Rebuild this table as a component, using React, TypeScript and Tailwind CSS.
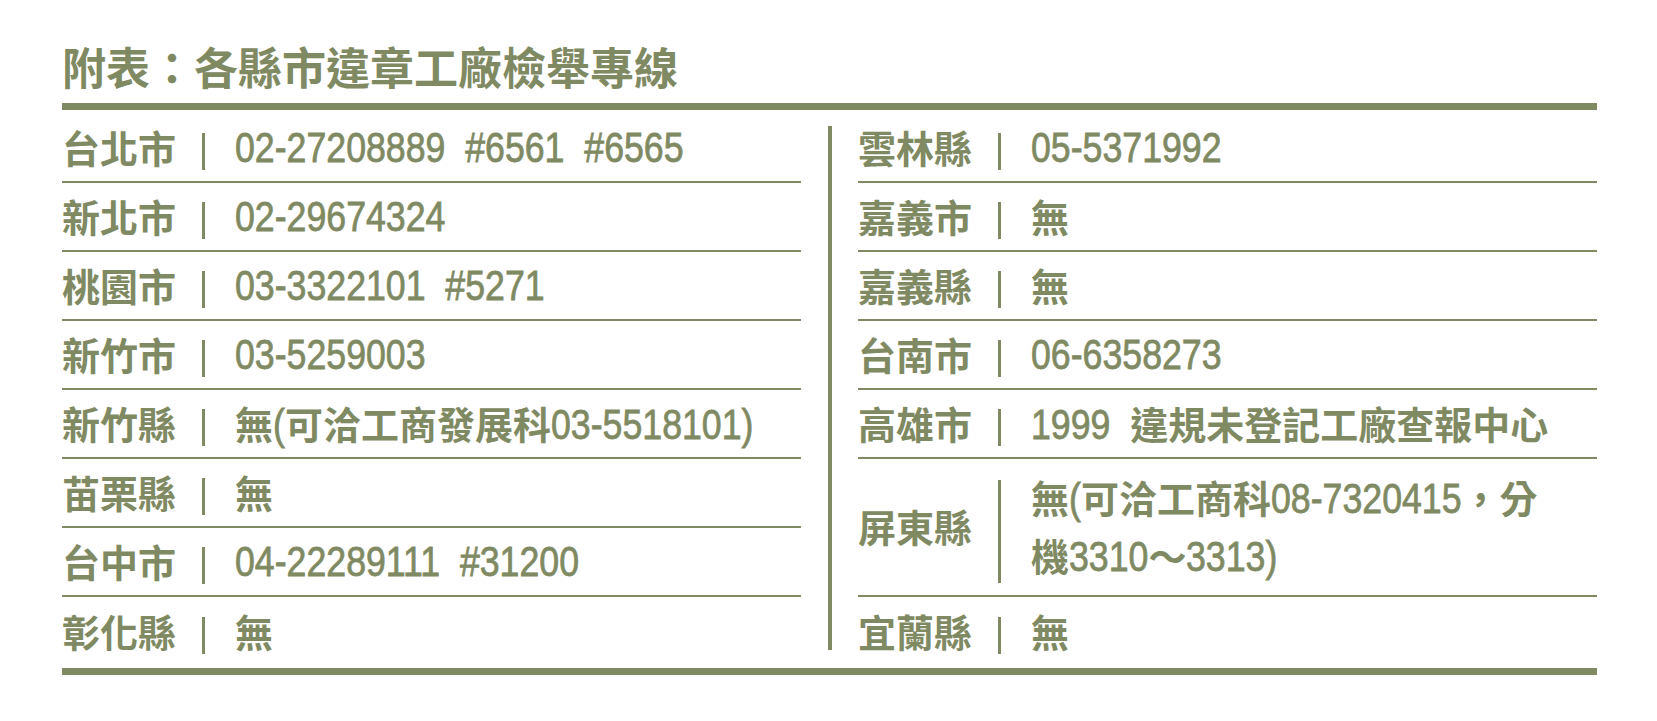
import React, { useLayoutEffect, useRef, useState } from 'react';

type Row = { name: string; value: string; tall?: boolean };

const leftRows: Row[] = [
  { name: '台北市', value: '02-27208889  #6561  #6565' },
  { name: '新北市', value: '02-29674324' },
  { name: '桃園市', value: '03-3322101  #5271' },
  { name: '新竹市', value: '03-5259003' },
  { name: '新竹縣', value: '無(可洽工商發展科03-5518101)' },
  { name: '苗栗縣', value: '無' },
  { name: '台中市', value: '04-22289111  #31200' },
  { name: '彰化縣', value: '無' },
];

const rightRows: Row[] = [
  { name: '雲林縣', value: '05-5371992' },
  { name: '嘉義市', value: '無' },
  { name: '嘉義縣', value: '無' },
  { name: '台南市', value: '06-6358273' },
  { name: '高雄市', value: '1999  違規未登記工廠查報中心' },
  { name: '屏東縣', value: '無(可洽工商科08-7320415，分\n機3310～3313)', tall: true },
  { name: '宜蘭縣', value: '無' },
];

const SQUEEZE = 0.83;

// no narrow face installed, so squeeze Liberation Sans and give back the spare width
const Narrow = ({ text }: { text: string }) => {
  const ref = useRef<HTMLSpanElement>(null);
  const [mr, setMr] = useState(0);
  useLayoutEffect(() => {
    if (ref.current) setMr(-ref.current.offsetWidth * (1 - SQUEEZE));
  }, [text]);
  return (
    <span
      ref={ref}
      className="inline-block origin-left scale-x-[0.83] font-['Liberation_Sans',Arial,sans-serif] text-[43px] whitespace-pre [-webkit-text-stroke:0.8px_#7f8a63]"
      style={{ marginRight: mr }}
    >
      {text}
    </span>
  );
};

const Txt = ({ s }: { s: string }) => {
  const parts = s.split(/([\x20-\x7e]+)/).filter(Boolean);
  return (
    <>
      {parts.map((p, i) =>
        /[\x20-\x7e]/.test(p) ? (
          <Narrow key={i} text={p} />
        ) : (
          <span key={i} className="font-['Noto_Sans_CJK_TC','Noto_Sans_CJK_JP',sans-serif] text-[38px] font-bold">
            {p}
          </span>
        )
      )}
    </>
  );
};

const TableRow = ({ row, last }: { row: Row; last: boolean }) => {
  const lines = row.value.split('\n');
  return (
    <div
      className={`flex items-center pt-[8px] ${row.tall ? 'h-[138px]' : 'h-[69px]'} ${
        last ? '' : 'border-b-2 border-[#7f8a63]'
      }`}
    >
      <div className="w-[114px] shrink-0 leading-[40px] whitespace-nowrap">
        <Txt s={row.name} />
      </div>
      <div
        className={`ml-[26px] mr-[30px] w-[3px] shrink-0 bg-[#7f8a63] ${
          row.tall ? 'h-[103px]' : 'h-[37px]'
        }`}
      />
      <div className="whitespace-nowrap">
        {lines.map((l, i) => (
          <div key={i} className="leading-[47px]">
            <Txt s={l} />
          </div>
        ))}
      </div>
    </div>
  );
};

export default function App() {
  return (
    <div className="w-[1657px] h-[721px] bg-white text-[#7f8a63] overflow-hidden">
      <div className="ml-[62px] w-[1535px] pt-[42px]">
        <h1 className="h-[48px] leading-[48px] text-[44px] font-bold font-['Noto_Sans_CJK_TC','Noto_Sans_CJK_JP',sans-serif] whitespace-nowrap">
          附表：各縣市違章工廠檢舉專線
        </h1>
        <div className="mt-[13px] h-[7px] bg-[#7f8a63]" />
        <div className="flex pb-[2px]">
          <div className="w-[739px] pt-[4px]">
            {leftRows.map((r, i) => (
              <TableRow key={r.name} row={r} last={i === leftRows.length - 1} />
            ))}
          </div>
          <div className="ml-[27px] mr-[26px] mt-[16px] mb-[16px] w-[4px] bg-[#7f8a63]" />
          <div className="w-[739px] pt-[4px]">
            {rightRows.map((r, i) => (
              <TableRow key={r.name} row={r} last={i === rightRows.length - 1} />
            ))}
          </div>
        </div>
        <div className="h-[7px] bg-[#7f8a63]" />
      </div>
    </div>
  );
}
